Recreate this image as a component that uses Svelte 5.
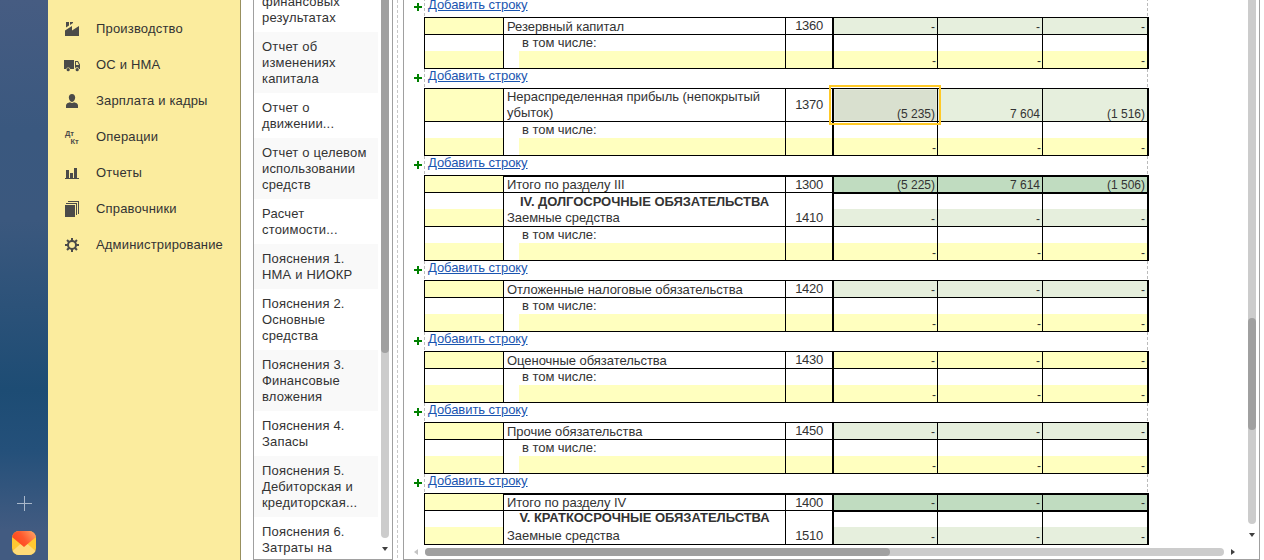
<script>
const menu = [
    { icon: 'factory', label: 'Производство' },
    { icon: 'truck', label: 'ОС и НМА' },
    { icon: 'person', label: 'Зарплата и кадры' },
    { icon: 'dtkt', label: 'Операции' },
    { icon: 'chart', label: 'Отчеты' },
    { icon: 'books', label: 'Справочники' },
    { icon: 'gear', label: 'Администрирование' }
]

const sections = [
    ['Отчет о', 'финансовых', 'результатах'],
    ['Отчет об', 'изменениях', 'капитала'],
    ['Отчет о', 'движении...'],
    ['Отчет о целевом', 'использовании', 'средств'],
    ['Расчет', 'стоимости...'],
    ['Пояснения 1.', 'НМА и НИОКР'],
    ['Пояснения 2.', 'Основные', 'средства'],
    ['Пояснения 3.', 'Финансовые', 'вложения'],
    ['Пояснения 4.', 'Запасы'],
    ['Пояснения 5.', 'Дебиторская и', 'кредиторская...'],
    ['Пояснения 6.', 'Затраты на']
]

const none = ['-', '-', '-']
const details = [
    { kind: 'sub', name: 'в том числе:' },
    { kind: 'entry', values: none }
]

const blocks = [
    [{ kind: 'line green', name: 'Резервный капитал', code: '1360', values: none }, ...details],
    [
        { kind: 'line green tall', name: 'Нераспределенная прибыль (непокрытый убыток)', code: '1370', values: ['(5 235)', '7 604', '(1 516)'], selected: 0 },
        ...details
    ],
    [
        { kind: 'line total', name: 'Итого по разделу III', code: '1300', values: ['(5 225)', '7 614', '(1 506)'] },
        { kind: 'head', name: 'IV. ДОЛГОСРОЧНЫЕ ОБЯЗАТЕЛЬСТВА' },
        { kind: 'line green first', name: 'Заемные средства', code: '1410', values: none },
        ...details
    ],
    [{ kind: 'line green', name: 'Отложенные налоговые обязательства', code: '1420', values: none }, ...details],
    [{ kind: 'line yellow', name: 'Оценочные обязательства', code: '1430', values: none }, ...details],
    [{ kind: 'line green', name: 'Прочие обязательства', code: '1450', values: none }, ...details],
    [
        { kind: 'line total', name: 'Итого по разделу IV', code: '1400', values: none },
        { kind: 'head raised', name: 'V. КРАТКОСРОЧНЫЕ ОБЯЗАТЕЛЬСТВА' },
        { kind: 'line green first', name: 'Заемные средства', code: '1510', values: none }
    ]
]
</script>

<div class="app">
    <div class="dock">
        <svg class="add" width="15" height="15" viewBox="0 0 15 15"><path d="M7.5 0v15M0 7.5h15" stroke="#a9b8cb" fill="none"/></svg>
        <svg class="mail" width="24" height="24" viewBox="0 0 24 24">
            <defs>
                <clipPath id="round"><rect width="24" height="24" rx="7"/></clipPath>
                <linearGradient id="flap" x1="0" y1="0.6" x2="1" y2="0.1">
                    <stop offset="0" stop-color="#ff4518"/>
                    <stop offset="0.45" stop-color="#ff5a2e"/>
                    <stop offset="1" stop-color="#ffa468"/>
                </linearGradient>
            </defs>
            <g clip-path="url(#round)">
                <rect width="24" height="24" fill="#ffc832"/>
                <path d="M0 20.5 9 12.5h6l9 8V24H0z" fill="#ffdb78"/>
                <path d="M0 0h24v6L12 16 0 6z" fill="url(#flap)"/>
            </g>
        </svg>
    </div>

    <nav class="menu">
        {#each menu as item}
            <div class="menuItem">
                <svg width="16" height="16" viewBox="0 0 16 16" fill="#4b4b49">
                    {#if item.icon === 'factory'}
                        <path d="M1 15V9.500l7-4.500v4.500l7-4.500V15zM2 1h3v3.500L2 6.500zM6 1h3v1L6 4z"/>
                    {:else if item.icon === 'truck'}
                        <path d="M0 3h10v9H6.3a2.2 2.2 0 0 0-4.1 0H0zM11 4h3l2 3.5V12h-.8a2.2 2.2 0 0 0-4.2-.4zM12 5v3h3l-1.5-3z" fill-rule="evenodd"/>
                        <circle cx="4.2" cy="12.7" r="1.6"/><circle cx="13.2" cy="12.7" r="1.6"/>
                    {:else if item.icon === 'person'}
                        <path d="M8 1c2 0 3.200 1.500 3.200 3.600S9.700 9 8 9 4.800 6.700 4.800 4.600 6 1 8 1zM2 15v-2.500C2 10.500 4 10 6 9.300c1 .9 3 .9 4 0 2 .7 4 1.200 4 3.200V15z"/>
                    {:else if item.icon === 'dtkt'}
                        <text x="1" y="7" class="glyph">Дт</text>
                        <text x="6.5" y="15" class="glyph">Кт</text>
                    {:else if item.icon === 'chart'}
                        <path d="M1 13h14v1H1zM2 5h3v8H2zM6 8h3v5H6zM10 3h3v10h-3z"/>
                    {:else if item.icon === 'books'}
                        <path d="M1 4h10v12H1zM2 2h11v12h-1V3H2zM4 0h11v13h-1V1H4z"/>
                    {:else}
                        <circle cx="8" cy="8" r="4" fill="none" stroke="#4b4b49" stroke-width="2"/>
                        {#each [0, 45, 90, 135, 180, 225, 270, 315] as angle}
                            <path d="M7 1h2v3H7z" transform="rotate({angle} 8 8)"/>
                        {/each}
                    {/if}
                </svg>
                <span>{item.label}</span>
            </div>
        {/each}
    </nav>

    <div class="sections">
        <div class="list">
            {#each sections as lines}
                <div class="section">
                    {#each lines as line}<div>{line}</div>{/each}
                </div>
            {/each}
        </div>
        <div class="listScroll">
            <div class="thumb"></div>
            <svg width="8" height="6" viewBox="0 0 8 6"><path d="M1 1h6L4 5z" fill="#404040"/></svg>
        </div>
    </div>

    <div class="splitter"></div>

    <div class="report">
        <div class="top">
            <div class="sheet">
                {#each blocks as rows}
                    <div class="addRow">
                        <svg width="8" height="8" viewBox="0 0 8 8"><path d="M3 0h2v3h3v2H5v3H3V5H0V3h3z" fill="#008000"/></svg>
                        <div class="addCell"><span class="link">Добавить строку</span></div>
                    </div>
                    <div class="block">
                        {#each rows as row}
                            <div class="row {row.kind}">
                                <div class="cell mark"></div>
                                <div class="cell name"><span>{row.name ?? ''}</span></div>
                                <div class="cell code">{row.code ?? ''}</div>
                                {#each [0, 1, 2] as i}
                                    <div class="cell value" class:selected={row.selected === i}>{row.values?.[i] ?? ''}</div>
                                {/each}
                            </div>
                        {/each}
                    </div>
                {/each}
            </div>
            <div class="vScroll">
                <div class="track"><div class="thumb"></div></div>
                <svg width="8" height="6" viewBox="0 0 8 6"><path d="M1 1h6L4 5z" fill="#404040"/></svg>
            </div>
        </div>
        <div class="hScroll">
            <svg width="6" height="8" viewBox="0 0 6 8"><path d="M5 1v6L1 4z" fill="#c4c4c4"/></svg>
            <div class="track"><div class="thumb"></div></div>
            <svg width="6" height="8" viewBox="0 0 6 8"><path d="M1 1v6l4-3z" fill="#404040"/></svg>
        </div>
    </div>
</div>

<style>
:global(body){
    background: #fff;
}
.app{
    display: flex;
    width: 1264px;
    height: 560px;
    overflow: hidden;
    box-sizing: border-box;
    font-family: "Liberation Sans", Arial, sans-serif;
    font-size: 13px;
    line-height: 16px;
    color: #333;
}
.app *, .app *::after{
    box-sizing: border-box;
}
.app svg{
    display: block;
    flex: none;
}

.dock{
    display: flex;
    flex-direction: column;
    align-items: center;
    justify-content: flex-end;
    gap: 20px;
    width: 48px;
    padding-bottom: 5px;
    background: linear-gradient(#465c82 0, #3a587f 130px, #3b587e 220px, #1d4c74 390px, #24507a 450px, #425b81 530px, #425b81 560px);
}

.menu{
    width: 193px;
    padding-top: 11px;
    background: #fbec9e;
    border-right: 1px solid #98905e;
}
.menuItem{
    display: flex;
    align-items: center;
    gap: 16px;
    height: 36px;
    padding-left: 16px;
    letter-spacing: 0.18px;
}
.glyph{
    font-size: 7.5px;
    font-weight: bold;
    letter-spacing: 0;
}

.sections{
    display: flex;
    width: 140px;
    margin-left: 12px;
    border: 1px solid #a0a0a0;
    border-top: 0;
    overflow: hidden;
}
.list{
    width: 124px;
    margin-top: -29px;
    letter-spacing: 0.18px;
}
.section{
    padding: 7px 0 6px 8px;
    white-space: nowrap;
}
.section:nth-child(even){
    background: #f9f9f9;
}
.listScroll{
    display: flex;
    flex-direction: column;
    align-items: center;
    gap: 8px;
    width: 8px;
    margin-left: 3px;
}
.listScroll .thumb{
    width: 8px;
    height: 538px;
    border-radius: 0 0 4px 4px;
    background: #ccc;
}
.listScroll .thumb::before{
    content: '';
    display: block;
    height: 353px;
    border-radius: 0 0 4px 4px;
    background: #a0a0a0;
}

.splitter{
    width: 10px;
    padding-left: 4px;
}
.splitter::before{
    content: '';
    display: block;
    width: 1px;
    height: 560px;
    background: repeating-linear-gradient(#c8c8c8 0 3px, #fff 3px 5px);
}

.report{
    width: 857px;
    border: 1px solid #a0a0a0;
    border-top: 0;
}
.top{
    display: flex;
    height: 545px;
}
.sheet{
    width: 745px;
    margin-top: -2px;
}
.addRow{
    display: flex;
    height: 19px;
    padding-left: 10px;
}
.addRow svg{
    margin: 5px 2px 0 0;
}
.addCell{
    width: 724px;
    padding-left: 4px;
    background:
        repeating-linear-gradient(#bbb 0 3px, #fff 3px 5px) left / 1px 100% no-repeat,
        repeating-linear-gradient(#bbb 0 3px, #fff 3px 5px) right / 1px 100% no-repeat;
}
.link{
    position: relative;
    top: -1px;
    color: #1a55b0;
    text-decoration: underline;
    letter-spacing: -0.05px;
}

.block{
    width: 725px;
    margin-left: 20px;
    border-top: 1px solid #000;
    border-right: 2px solid #000;
}
.row{
    display: grid;
    grid-template-columns: 79px 282px 47px 105px 105px 105px;
    height: 17px;
    border-bottom: 1px solid #000;
}
.row.tall{
    height: 33px;
}
.row.sub, .row.head{
    height: 16px;
    border-bottom: 0;
}
.row.entry, .row.first{
    height: 18px;
}
.cell{
    height: 100%;
    min-height: 0;
    border-left: 1px solid #000;
}
.line .mark, .entry .mark, .entry .code, .entry .value, .yellow .value{
    background: #ffffbf;
}
.entry .name{
    background: linear-gradient(#ffffbf, #ffffbf) 15px 0 no-repeat;
}
.name{
    padding-left: 3px;
    letter-spacing: -0.04px;
}
.line:not(.tall) .name{
    line-height: 18px;
}
.sub .name{
    padding-left: 18px;
}
.head .name{
    padding-left: 0;
    line-height: 18px;
    text-align: center;
    font-weight: bold;
    letter-spacing: -0.05px;
}
.raised .name{
    line-height: 14px;
}
.code{
    display: flex;
    align-items: center;
    justify-content: center;
    line-height: 15px;
    letter-spacing: -0.3px;
}
.green:not(.first) .code, .yellow .code{
    padding-bottom: 2px;
}
.value{
    display: flex;
    align-items: flex-end;
    justify-content: flex-end;
    padding-right: 2px;
    font-size: 12px;
    line-height: 14px;
}
.entry .value:not(:last-child){
    padding-right: 1px;
}
.code + .value{
    border-left-width: 2px;
}
.green .value{
    background: #e6efdd;
}
.total .value{
    background: #c0dcc0;
}
.total .cell:not(.mark), .total + .head .value{
    box-shadow: inset 0 1px #000;
}
.green .value.selected{
    position: relative;
    background: #d9e0cf;
    box-shadow: inset 0 0 0 1px #e4eadc;
}
/* frame of the active cell lies over the neighbouring borders */
.selected::after{
    content: '';
    position: absolute;
    z-index: 1;
    top: -4px;
    left: -5px;
    width: 112px;
    height: 40px;
    border: 2px solid #ffc926;
}

.vScroll{
    display: flex;
    flex-direction: column;
    align-items: center;
    gap: 8px;
    width: 8px;
    margin-left: 99px;
}
.vScroll .track{
    width: 8px;
    height: 524px;
    padding-top: 318px;
    border-radius: 0 0 4px 4px;
    background: #ccc;
}
.vScroll .thumb{
    height: 112px;
    border-radius: 4px;
    background: #a0a0a0;
}
.hScroll{
    display: flex;
    align-items: center;
    gap: 6px;
    height: 14px;
    padding-left: 9px;
}
.hScroll .track{
    width: 799px;
    height: 8px;
    border-radius: 4px;
    background: #ccc;
}
.hScroll .thumb{
    width: 465px;
    height: 8px;
    border-radius: 4px;
    background: #a0a0a0;
}
</style>
